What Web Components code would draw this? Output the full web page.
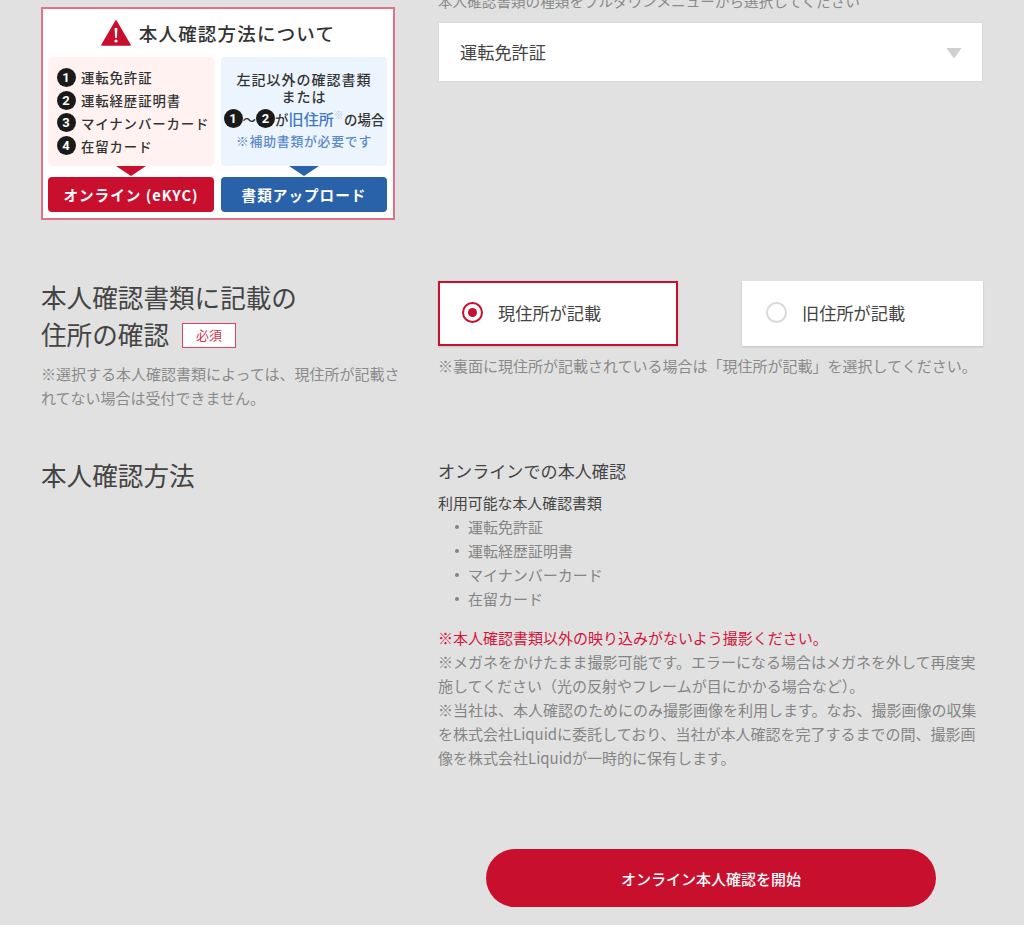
<!DOCTYPE html>
<html lang="ja">
<head>
<meta charset="utf-8">
<title>本人確認</title>
<style>
  html, body { margin: 0; background: #e1e1e1; overflow: hidden; }
  body { font-family: "Noto Sans CJK JP", "Noto Sans", sans-serif; color: #444; }
</style>
</head>
<body>
<kyc-page>
  <form-row style="--row-top:0px">
    <kyc-banner slot="label"></kyc-banner>
    <field-hint style="--hint-size:14.6px">本人確認書類の種類をプルダウンメニューから選択してください</field-hint>
    <select-box value="運転免許証"></select-box>
  </form-row>

  <form-row style="--row-top:61px">
    <row-title slot="label">本人確認書類に記載の<br>住所の確認<req-badge>必須</req-badge></row-title>
    <field-hint slot="label" style="--hint-top:10px">※選択する本人確認書類によっては、現住所が記載されてない場合は受付できません。</field-hint>
    <radio-group>
      <radio-card checked>現住所が記載</radio-card>
      <radio-card>旧住所が記載</radio-card>
    </radio-group>
    <field-hint style="--hint-top:8px">※裏面に現住所が記載されている場合は「現住所が記載」を選択してください。</field-hint>
  </form-row>

  <form-row style="--row-top:46px">
    <row-title slot="label" style="--title-top:0px">本人確認方法</row-title>
    <method-info></method-info>
  </form-row>

  <cta-button>オンライン本人確認を開始</cta-button>
</kyc-page>

<script>
class KycPage extends HTMLElement {
  constructor() {
    super();
    this.attachShadow({ mode: 'open' });
  }

  connectedCallback() {
    this.shadowRoot.innerHTML = `
      <style>
        :host { display: block; margin-top: -11px; padding: 0 41px 18px; }
      </style>
      <slot></slot>
    `;
  }
}

class FormRow extends HTMLElement {
  constructor() {
    super();
    this.attachShadow({ mode: 'open' });
  }

  connectedCallback() {
    this.shadowRoot.innerHTML = `
      <style>
        :host {
          display: grid;
          grid-template-columns: 360px 545px;
          column-gap: 37px;
          margin-top: var(--row-top, 0);
        }
      </style>
      <div><slot name="label"></slot></div>
      <div><slot></slot></div>
    `;
  }
}

class RowTitle extends HTMLElement {
  constructor() {
    super();
    this.attachShadow({ mode: 'open' });
  }

  connectedCallback() {
    this.shadowRoot.innerHTML = `
      <style>
        :host {
          display: block;
          margin-top: var(--title-top, -3px);
          font-size: 25.6px;
          line-height: 37px;
          color: #444;
        }
      </style>
      <slot></slot>
    `;
  }
}

class ReqBadge extends HTMLElement {
  constructor() {
    super();
    this.attachShadow({ mode: 'open' });
  }

  connectedCallback() {
    this.shadowRoot.innerHTML = `
      <style>
        :host {
          display: inline-block;
          box-sizing: border-box;
          width: 54px;
          height: 25px;
          margin-left: 13px;
          border: 1.5px solid #d6446a;
          background: #fff;
          color: #d0304f;
          font-size: 13px;
          line-height: 22px;
          text-align: center;
          vertical-align: 5px;
        }
      </style>
      <slot></slot>
    `;
  }
}

class FieldHint extends HTMLElement {
  constructor() {
    super();
    this.attachShadow({ mode: 'open' });
  }

  connectedCallback() {
    this.shadowRoot.innerHTML = `
      <style>
        :host {
          display: block;
          margin-top: var(--hint-top, 0);
          font-size: var(--hint-size, 15px);
          line-height: 24px;
          color: #8a8a8a;
        }
      </style>
      <slot></slot>
    `;
  }
}

class SelectBox extends HTMLElement {
  constructor() {
    super();
    this.attachShadow({ mode: 'open' });
  }

  connectedCallback() {
    this.shadowRoot.innerHTML = `
      <style>
        :host {
          display: flex;
          box-sizing: border-box;
          align-items: center;
          justify-content: space-between;
          height: 60px;
          margin-top: 9px;
          padding: 0 20px 0 21px;
          background: #fff;
          border: 1px solid #d9d9d9;
          font-size: 17.2px;
          color: #444;
        }
        .value { margin-top: -2px; }
        .arrow {
          width: 16px;
          height: 11px;
          margin-top: 2px;
          background: #cfcfcf;
          clip-path: polygon(0 0, 100% 0, 50% 100%);
        }
      </style>
      <span class="value">${this.getAttribute('value')}</span>
      <span class="arrow"></span>
    `;
  }
}

class RadioGroup extends HTMLElement {
  constructor() {
    super();
    this.attachShadow({ mode: 'open' });
  }

  connectedCallback() {
    this.shadowRoot.innerHTML = `
      <style>
        :host {
          display: grid;
          grid-template-columns: 240px 241px;
          column-gap: 64px;
        }
      </style>
      <slot></slot>
    `;
  }
}

class RadioCard extends HTMLElement {
  constructor() {
    super();
    this.attachShadow({ mode: 'open' });
  }

  connectedCallback() {
    const checked = this.hasAttribute('checked');
    this.shadowRoot.innerHTML = `
      <style>
        :host {
          display: flex;
          box-sizing: border-box;
          align-items: center;
          gap: 15px;
          height: 65px;
          padding: 0 0 2px 22px;
          background: #fff;
          border: 2px solid ${checked ? '#c8102e' : 'transparent'};
          box-shadow: 0 1px 2px rgba(0, 0, 0, .15);
          font-size: 17.2px;
          color: #444;
        }
        .dot {
          display: flex;
          box-sizing: border-box;
          align-items: center;
          justify-content: center;
          width: 21px;
          height: 21px;
          border-radius: 50%;
          border: 2px solid ${checked ? '#c8102e' : '#d9d9d9'};
        }
        .dot i {
          display: ${checked ? 'block' : 'none'};
          width: 9px;
          height: 9px;
          border-radius: 50%;
          background: #c8102e;
        }
      </style>
      <span class="dot"><i></i></span>
      <slot></slot>
    `;
  }
}

class MethodInfo extends HTMLElement {
  constructor() {
    super();
    this.attachShadow({ mode: 'open' });
  }

  connectedCallback() {
    const docs = ['運転免許証', '運転経歴証明書', 'マイナンバーカード', '在留カード'];
    this.shadowRoot.innerHTML = `
      <style>
        :host { display: block; font-size: 15px; line-height: 24px; color: #858585; }
        h3 { margin: 0; font-size: 17.1px; font-weight: 400; line-height: 30px; color: #444; }
        h4 { margin: 5px 0 0; font-size: 14.9px; font-weight: 400; color: #444; }
        ul { margin: 0; padding: 0 0 0 17px; list-style: none; }
        li { display: flex; align-items: center; gap: 9px; }
        li::before { content: ""; width: 4px; height: 4px; border-radius: 50%; background: #858585; }
        p { margin: 0; }
        .warn { margin-top: 15px; color: #d0163c; }
      </style>
      <h3>オンラインでの本人確認</h3>
      <h4>利用可能な本人確認書類</h4>
      <ul>${docs.map(doc => `<li>${doc}</li>`).join('')}</ul>
      <p class="warn">※本人確認書類以外の映り込みがないよう撮影ください。</p>
      <p>※メガネをかけたまま撮影可能です。エラーになる場合はメガネを外して再度実施してください（光の反射やフレームが目にかかる場合など）。</p>
      <p>※当社は、本人確認のためにのみ撮影画像を利用します。なお、撮影画像の収集を株式会社Liquidに委託しており、当社が本人確認を完了するまでの間、撮影画像を株式会社Liquidが一時的に保有します。</p>
    `;
  }
}

class CtaButton extends HTMLElement {
  constructor() {
    super();
    this.attachShadow({ mode: 'open' });
  }

  connectedCallback() {
    this.shadowRoot.innerHTML = `
      <style>
        :host {
          display: flex;
          align-items: center;
          justify-content: center;
          width: 450px;
          height: 58px;
          margin: 79px 0 0 445px;
          border-radius: 29px;
          background: #c8102e;
          color: #fff;
          font-size: 15px;
          font-weight: 500;
        }
      </style>
      <slot></slot>
    `;
  }
}

class NumMark extends HTMLElement {
  constructor() {
    super();
    this.attachShadow({ mode: 'open' });
  }

  connectedCallback() {
    this.shadowRoot.innerHTML = `
      <style>
        :host {
          display: inline-flex;
          align-items: center;
          justify-content: center;
          flex: none;
          width: 19px;
          height: 19px;
          border-radius: 50%;
          background: #1a1a1a;
          color: #fff;
          font: 700 13px/1 Roboto, sans-serif;
        }
      </style>
      <slot></slot>
    `;
  }
}

class KycBanner extends HTMLElement {
  constructor() {
    super();
    this.attachShadow({ mode: 'open' });
  }

  connectedCallback() {
    const docs = ['運転免許証', '運転経歴証明書', 'マイナンバーカード', '在留カード'];
    this.shadowRoot.innerHTML = `
      <style>
        :host {
          display: block;
          box-sizing: border-box;
          width: 354px;
          height: 213px;
          margin-top: 18px;
          padding: 0 5px;
          background: #fff;
          border: 2px solid #df7288;
          color: #333;
        }
        .title {
          display: flex;
          align-items: center;
          justify-content: center;
          gap: 8px;
          height: 48px;
          font-size: 18.5px;
          font-weight: 500;
          letter-spacing: 1.2px;
        }
        .title svg { width: 30px; height: 26px; }
        .cols { display: grid; grid-template-columns: 166px 166px; column-gap: 7px; }
        .col { display: flex; flex-direction: column; }
        .panel {
          display: flex;
          box-sizing: border-box;
          flex-direction: column;
          justify-content: center;
          height: 109px;
          border-radius: 4px;
          font-size: 13.4px;
          font-weight: 500;
          letter-spacing: .9px;
        }
        .pink { background: #fff2f1; padding-left: 9px; gap: 3.7px; }
        .pink div { display: flex; align-items: center; gap: 5px; height: 19px; }
        .sky { background: #ecf4fe; align-items: center; padding-bottom: 2px; white-space: nowrap; }
        .sky .tight { font-size: 14px; letter-spacing: 1px; line-height: 17px; }
        .sky .mix { display: flex; align-items: center; height: 27px; letter-spacing: .1px; }
        .blue { color: #3f78c0; font-size: 15px; }
        .blue sup { font-size: 10px; color: #a9c4e6; line-height: 0; }
        .note { color: #5b8ac8; font-size: 12.8px; letter-spacing: .8px; line-height: 18px; }
        .arrow {
          align-self: center;
          width: 30px;
          height: 10px;
          margin-bottom: 1px;
          clip-path: polygon(0 0, 100% 0, 50% 100%);
        }
        .btn {
          display: flex;
          align-items: center;
          justify-content: center;
          height: 35px;
          border-radius: 4px;
          color: #fff;
          font-size: 14.6px;
          font-weight: 700;
          letter-spacing: 1px;
          white-space: nowrap;
        }
        .red { background: #c8102e; }
        .navy { background: #2a62aa; }
      </style>
      <div class="title">
        <svg viewBox="0 0 30 26">
          <path d="M15 1 29 25H1Z" fill="#c8102e" stroke="#c8102e" stroke-width="1.5" stroke-linejoin="round"/>
          <path d="M13.6 8h2.8l-.5 10h-1.8Z" fill="#fff"/>
          <circle cx="15" cy="21" r="1.6" fill="#fff"/>
        </svg>
        <span>本人確認方法について</span>
      </div>
      <div class="cols">
        <div class="col">
          <div class="panel pink">
            ${docs.map((doc, i) => `<div><num-mark>${i + 1}</num-mark><span>${doc}</span></div>`).join('')}
          </div>
          <div class="arrow red"></div>
          <div class="btn red">オンライン (eKYC)</div>
        </div>
        <div class="col">
          <div class="panel sky">
            <span class="tight">左記以外の確認書類</span>
            <span class="tight">または</span>
            <span class="mix"><num-mark>1</num-mark>～<num-mark>2</num-mark>が<span class="blue">旧住所<sup>※</sup></span>の場合</span>
            <span class="note">※補助書類が必要です</span>
          </div>
          <div class="arrow navy"></div>
          <div class="btn navy">書類アップロード</div>
        </div>
      </div>
    `;
  }
}

customElements.define('kyc-page', KycPage);
customElements.define('form-row', FormRow);
customElements.define('row-title', RowTitle);
customElements.define('req-badge', ReqBadge);
customElements.define('field-hint', FieldHint);
customElements.define('select-box', SelectBox);
customElements.define('radio-group', RadioGroup);
customElements.define('radio-card', RadioCard);
customElements.define('method-info', MethodInfo);
customElements.define('cta-button', CtaButton);
customElements.define('num-mark', NumMark);
customElements.define('kyc-banner', KycBanner);
</script>
</body>
</html>
